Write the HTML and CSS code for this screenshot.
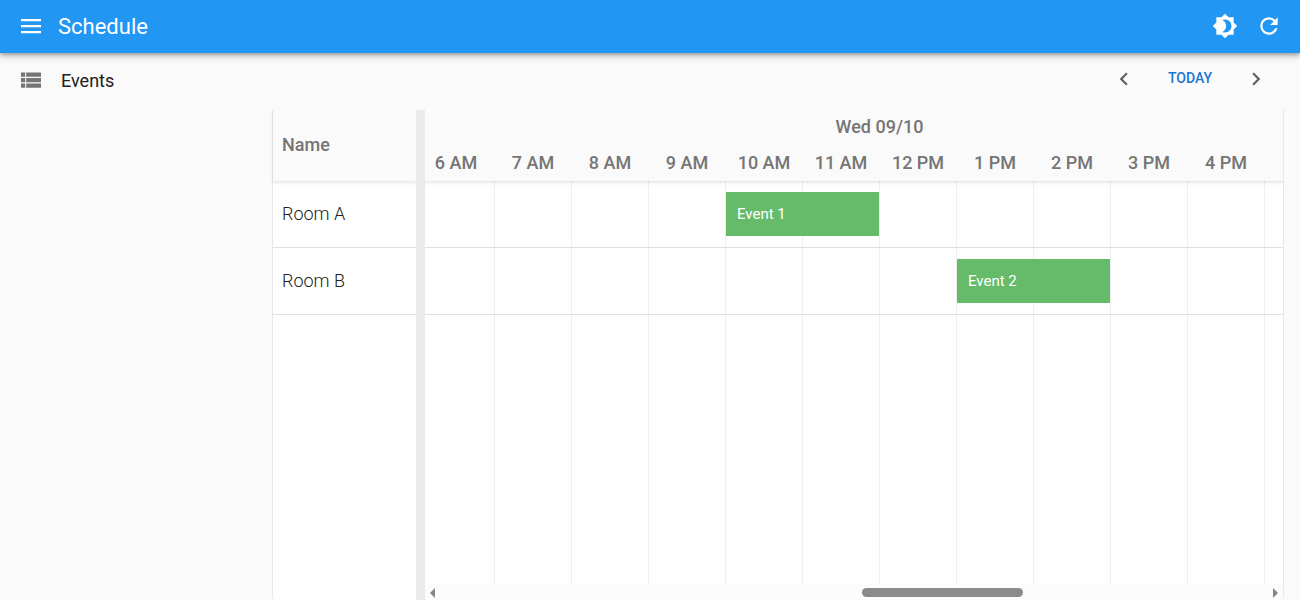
FILE: index.html
```
<!DOCTYPE html>
<html lang="en">
<head>
<meta charset="utf-8">
<title>Schedule</title>
<link rel="stylesheet" href="styles.css">
</head>
<body>
<header class="app-bar">
  <button class="icon-button" type="button" aria-label="Open menu">
    <svg class="icon" viewBox="0 0 24 24"><path d="M2 5h20v2.200H2zM2 11h20v2.200H2zM2 17h20v2.200H2z"/></svg>
  </button>
  <h1 class="app-title">Schedule</h1>
  <button class="icon-button" type="button" aria-label="Toggle theme">
    <svg class="icon icon-large" viewBox="0 0 24 24"><path d="M20 8.690V4h-4.690L12 .690 8.690 4H4v4.690L.690 12 4 15.310V20h4.690L12 23.310 15.310 20H20v-4.690L23.310 12 20 8.690zM12 18c-.890 0-1.740-.200-2.500-.550C11.560 16.500 13 14.420 13 12s-1.440-4.500-3.500-5.450C10.260 6.200 11.110 6 12 6c3.310 0 6 2.690 6 6s-2.690 6-6 6z"/></svg>
  </button>
  <button class="icon-button" type="button" aria-label="Refresh">
    <svg class="icon icon-large" viewBox="0 0 24 24"><path d="M17.650 6.350C16.200 4.900 14.210 4 12 4c-4.420 0-7.990 3.580-7.990 8s3.570 8 7.990 8c3.730 0 6.840-2.550 7.730-6h-2.080c-.820 2.330-3.040 4-5.650 4-3.310 0-6-2.690-6-6s2.690-6 6-6c1.660 0 3.140.690 4.220 1.780L13 11h7V4l-2.350 2.350z"/></svg>
  </button>
</header>
<div class="layout">
  <nav class="sidebar">
    <a class="nav-item" href="#events">
      <svg class="icon nav-icon" viewBox="0 0 24 24"><path d="M2 4.500h4.200v4.300H2zM7.200 4.500H22v4.300H7.200zM2 10h4.200v4.300H2zM7.200 10H22v4.300H7.200zM2 15.500h4.200v4.300H2zM7.200 15.500H22v4.300H7.200z"/></svg>
      <span>Events</span>
    </a>
  </nav>
  <main class="content">
    <div class="toolbar">
      <button class="step-button" type="button" aria-label="Previous day">
        <svg class="icon icon-large" viewBox="0 0 24 24"><path d="M15.410 7.410 14 6l-6 6 6 6 1.410-1.410L10.830 12z"/></svg>
      </button>
      <button class="today-button" type="button">TODAY</button>
      <button class="step-button" type="button" aria-label="Next day">
        <svg class="icon icon-large" viewBox="0 0 24 24"><path d="M10 6 8.590 7.410 13.170 12l-4.580 4.590L10 18l6-6z"/></svg>
      </button>
    </div>
    <section class="scheduler" aria-label="Schedule">
      <table class="resources">
        <thead><tr><th scope="col">Name</th></tr></thead>
        <tbody>
          <tr><td>Room A</td></tr>
          <tr><td>Room B</td></tr>
        </tbody>
      </table>
      <div class="splitter"></div>
      <div class="timeline">
        <div class="viewport">
          <table class="track">
            <thead>
              <tr class="day"><th colspan="12">Wed 09/10</th></tr>
              <tr class="hours">
                <th>6 AM</th><th>7 AM</th><th>8 AM</th><th>9 AM</th><th>10 AM</th><th>11 AM</th>
                <th>12 PM</th><th>1 PM</th><th>2 PM</th><th>3 PM</th><th>4 PM</th><th></th>
              </tr>
            </thead>
            <tbody>
              <tr><td colspan="4"></td><td colspan="2"><div class="event">Event 1</div></td><td colspan="6"></td></tr>
              <tr><td colspan="7"></td><td colspan="2"><div class="event">Event 2</div></td><td colspan="3"></td></tr>
            </tbody>
          </table>
        </div>
        <div class="scrollbar">
          <button class="scroll-arrow" type="button" aria-label="Scroll left"><svg viewBox="0 0 5 10"><path d="M5 0v10L0 5z"/></svg></button>
          <div class="rail"><div class="thumb"></div></div>
          <button class="scroll-arrow" type="button" aria-label="Scroll right"><svg viewBox="0 0 5 10"><path d="M0 0v10l5-5z"/></svg></button>
        </div>
      </div>
    </section>
  </main>
</div>
</body>
</html>
```
FILE: styles.css
```
* { box-sizing: border-box; }

:root {
  --hour: 77px;
  --row: 67px;
  --scrolled: 7px;
  --line: #e0e0e0;
  --muted: #757575;
}

body {
  margin: 0;
  height: 100vh;
  display: flex;
  flex-direction: column;
  background: #fafafa;
  color: #212121;
  font-family: Roboto, "Liberation Sans", sans-serif;
  overflow: hidden;
}

button {
  border: 0;
  padding: 0;
  background: none;
  color: inherit;
  font: inherit;
  display: flex;
  align-items: center;
  justify-content: center;
}

.icon { width: 24px; height: 24px; fill: currentColor; display: block; }
.icon-large { width: 26px; height: 26px; }

.app-bar {
  display: flex;
  align-items: center;
  height: 53px;
  padding: 0 9px 1px;
  background: #2196f3;
  color: #fff;
  box-shadow: 0 2px 4px rgba(0, 0, 0, .3), 0 4px 8px rgba(0, 0, 0, .12);
  z-index: 1;
}

.icon-button { width: 44px; height: 44px; }
.app-title { flex: 1; margin: 0 0 0 5px; font-size: 22px; font-weight: 400; }

.layout { flex: 1; display: flex; min-height: 0; }
.sidebar { width: 272px; padding-top: 5px; }

.nav-item {
  display: flex;
  align-items: center;
  gap: 18px;
  height: 44px;
  padding-left: 19px;
  color: inherit;
  font-size: 18px;
  text-decoration: none;
}
.nav-icon { color: var(--muted); }

.content { flex: 1; min-width: 0; display: flex; flex-direction: column; padding-right: 16px; }

.toolbar {
  display: flex;
  align-items: center;
  justify-content: flex-end;
  height: 57px;
  padding: 0 6px 6px 0;
}
.step-button { width: 44px; height: 44px; color: #616161; }
.today-button { width: 88px; height: 40px; padding-bottom: 2px; color: #1976d2; font-size: 14px; font-weight: 500; }

.scheduler {
  flex: 1;
  display: flex;
  min-height: 0;
  background: #fff;
  border: solid #e8e8e8;
  border-width: 0 1px;
  border-radius: 0 0 4px 4px;
}

table { border-collapse: separate; border-spacing: 0; table-layout: fixed; }
th { padding: 0; color: var(--muted); font-size: 18px; font-weight: 500; }
td { height: var(--row); padding: 0; border-bottom: 1px solid var(--line); }
thead { background: #fafafa; box-shadow: 0 2px 3px rgba(0, 0, 0, .1); }

.resources { width: 143px; align-self: flex-start; text-align: left; font-size: 18px; font-weight: 300; }
.resources th { height: 71px; }
.resources th, .resources td { padding: 0 0 2px 9px; }

.splitter { width: 9px; background: #eaeaea; }

.timeline { flex: 1; min-width: 0; display: flex; flex-direction: column; }
.viewport {
  flex: 1;
  overflow: hidden;
  background: repeating-linear-gradient(to right, transparent 0 76px, #eee 76px 77px);
  background-position-x: calc(-1 * var(--scrolled));
  background-size: calc(100% + var(--hour)) 100%;
}
.track { width: calc(12 * var(--hour)); margin-left: calc(-1 * var(--scrolled)); }
.track th { padding-right: 1px; }
.day th { height: 34px; padding-bottom: 2px; }
.hours th { height: 37px; }

.event {
  display: flex;
  align-items: center;
  height: 44px;
  margin-right: 1px;
  padding-left: 11px;
  background: #66bb6a;
  color: #fff;
  font-size: 15px;
}

.scrollbar { display: flex; height: 16px; background: #fcfcfc; color: #858585; }
.scroll-arrow { width: 15px; height: 17px; }
.scroll-arrow svg { width: 5px; height: 10px; fill: currentColor; }
.rail { flex: 1; padding-top: 4px; }
.thumb { width: 161px; height: 9px; margin-left: 51%; border-radius: 5px; background: #8b8b8b; }
```
